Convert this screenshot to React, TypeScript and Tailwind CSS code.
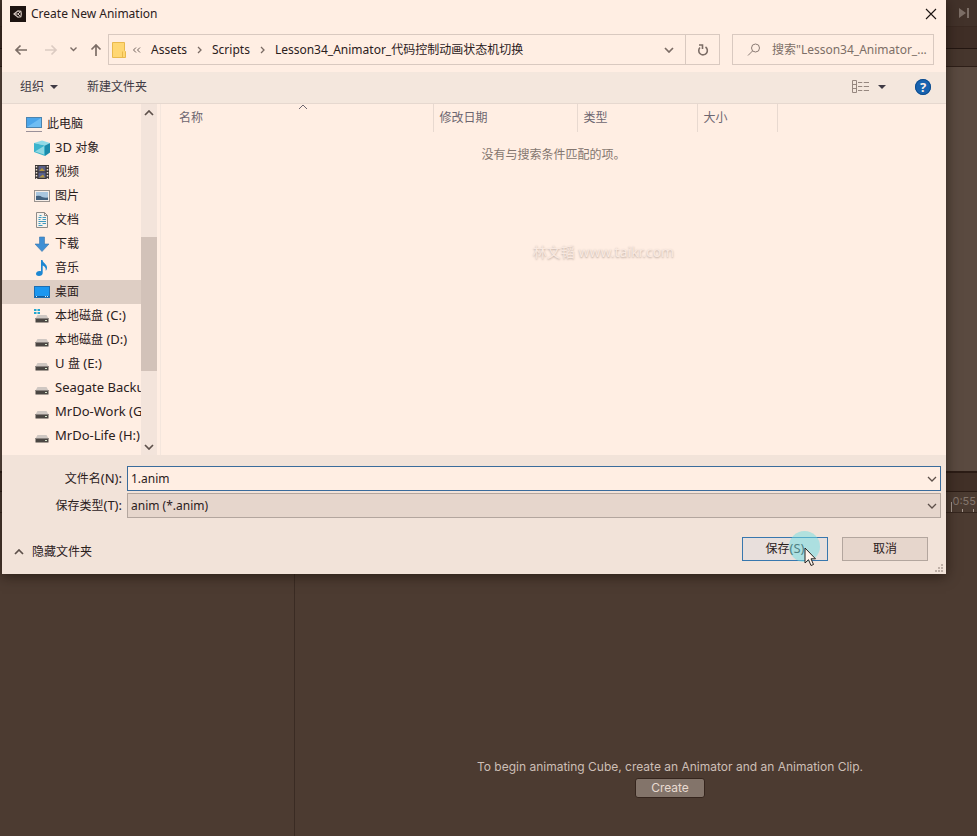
import type { ReactNode } from 'react';

type IconProps = { className?: string };

function Chevron({ className = '' }: IconProps) {
  return (
    <svg viewBox="0 0 10 6" className={`h-[6px] w-[10px] shrink-0 ${className}`} fill="none" stroke="currentColor">
      <path d="M1 1l4 4 4-4" />
    </svg>
  );
}

function UnityIcon() {
  return (
    <svg viewBox="0 0 16 16" className="size-4 shrink-0">
      <rect width="16" height="16" fill="#1d1310" />
      <path d="M4 8l4-3.200 2.800.4.500 2.800-.5 2.800-2.800.4z" fill="none" stroke="#d9cbc3" strokeWidth="1.200" />
      <path d="M4 8H8M8 8l2.500-2.500M8 8l2.500 2.500" stroke="#d9cbc3" />
    </svg>
  );
}

function PcIcon() {
  return (
    <svg viewBox="0 0 16 16" className="size-4 shrink-0">
      <rect x="0.500" y="1.500" width="15" height="10" fill="#4ba5ea" stroke="#4b83ae" />
      <path d="M1 11L15 2v9z" fill="#6fbdf3" />
      <path d="M0 15.500h16" stroke="#9a9099" />
    </svg>
  );
}

function CubeIcon() {
  return (
    <svg viewBox="0 0 16 16" className="size-4 shrink-0">
      <path d="M0 3l8-2.500L16 3l-5 2.500z" fill="#8fdbe8" />
      <path d="M0 3l11 2.500V16L0 12z" fill="#3cb4cd" />
      <path d="M11 5.500L16 3v9.500L11 16z" fill="#1b8bab" />
      <path d="M1 11.500l9-5.500v8.500z" fill="#8fd8e2" />
    </svg>
  );
}

function VideoIcon() {
  return (
    <svg viewBox="0 0 16 16" className="size-4 shrink-0">
      <rect x="1" y="1" width="14" height="14" fill="#3a3534" />
      <path d="M2.500 2v13M13.500 2v13" stroke="#e9ddd3" strokeWidth="1.500" strokeDasharray="1.500 1.500" />
      <rect x="4.500" y="2" width="7" height="5.500" fill="#5a5f86" />
      <rect x="4.500" y="8.500" width="7" height="5.500" fill="#56608e" />
      <path d="M5 7l3-3 3 3zM5 13.500l4-3 2 3z" fill="#b5973d" />
    </svg>
  );
}

function PictureIcon() {
  return (
    <svg viewBox="0 0 16 16" className="size-4 shrink-0">
      <rect x="0.500" y="2.500" width="15" height="11" fill="#f7eee8" stroke="#9a938f" />
      <rect x="2" y="4" width="12" height="8" fill="#a9c6df" />
      <path d="M2 8q4-1 6 1 3 1 6 .5V12H2z" fill="#42617f" />
    </svg>
  );
}

function DocIcon() {
  return (
    <svg viewBox="0 0 16 16" className="size-4 shrink-0">
      <path d="M2.500.5h8l3 3v12h-11z" fill="#f8f1eb" stroke="#8f8b87" />
      <path d="M10.500.5v3h3" fill="none" stroke="#8f8b87" />
      <path d="M5.500 3.500h2M4.500 5.500h3M8.500 5.500h3.500M4.500 7.500h2M8.500 7.500H12M4.500 9.500h7.500M4.500 11.500h2M8.500 11.500H12M4.500 13.500h4" stroke="#3f9abf" />
    </svg>
  );
}

function DownloadIcon() {
  return (
    <svg viewBox="0 0 16 16" className="size-4 shrink-0">
      <path d="M5.500 1h5v7H15l-7 7.500L1 8h4.500z" fill="#3f8fd4" stroke="#3a76ad" strokeWidth="0.600" />
    </svg>
  );
}

function MusicIcon() {
  return (
    <svg viewBox="0 0 16 16" className="size-4 shrink-0">
      <path d="M7 0h1.500c.3 3 4.500 4 4.500 7.500 0 1.500-.5 2.500-1.300 3.300.6-3-1-4.300-3-5.300V13c0 1.800-1.700 3-3.700 3C3.300 16 2 15.200 2 13.800c0-1.600 1.700-2.800 3.500-2.800.6 0 1 .1 1.500.3z" fill="#1d87d2" />
    </svg>
  );
}

function DesktopIcon() {
  return (
    <svg viewBox="0 0 16 16" className="size-4 shrink-0">
      <rect x="0.500" y="2.500" width="15" height="11" fill="#1b97f0" stroke="#1c6eb2" />
      <path d="M1 12.500h14" stroke="#155c98" />
      <path d="M2 12.500h2M11 12.500h3" stroke="#d9ecf8" strokeDasharray="1 1" />
    </svg>
  );
}

function DriveIcon({ system = false }: { system?: boolean }) {
  return (
    <svg viewBox="0 0 16 16" className="size-4 shrink-0">
      {system && <path d="M0 1h2.500v2H0zM3.500 1H6v2H3.500zM0 4h2.500v2H0zM3.500 4H6v2H3.500z" fill="#23a7cf" />}
      <path d="M3.500 7h9l2 3.500h-13z" fill="#cfc7c2" />
      <rect x="1.500" y="10" width="13" height="4.500" fill="#4b4643" />
      <path d="M1.500 10.500h13" stroke="#8a837f" />
      <rect x="11" y="12" width="2" height="1" fill="#d6e6cb" />
    </svg>
  );
}

const places: { label: string; icon: ReactNode; root?: boolean; selected?: boolean }[] = [
  { label: '此电脑', icon: <PcIcon />, root: true },
  { label: '3D 对象', icon: <CubeIcon /> },
  { label: '视频', icon: <VideoIcon /> },
  { label: '图片', icon: <PictureIcon /> },
  { label: '文档', icon: <DocIcon /> },
  { label: '下载', icon: <DownloadIcon /> },
  { label: '音乐', icon: <MusicIcon /> },
  { label: '桌面', icon: <DesktopIcon />, selected: true },
  { label: '本地磁盘 (C:)', icon: <DriveIcon system /> },
  { label: '本地磁盘 (D:)', icon: <DriveIcon /> },
  { label: 'U 盘 (E:)', icon: <DriveIcon /> },
  { label: 'Seagate Backu', icon: <DriveIcon /> },
  { label: 'MrDo-Work (G', icon: <DriveIcon /> },
  { label: 'MrDo-Life (H:)', icon: <DriveIcon /> },
];

function TitleBar() {
  return (
    <header className="flex h-[27px] items-center gap-[5px] pr-[9px] pl-2">
      <UnityIcon />
      <h1 className="flex-1">Create New Animation</h1>
      <button type="button" aria-label="关闭">
        <svg viewBox="0 0 12 12" className="size-3" stroke="#1b1412" strokeWidth="1.100">
          <path d="M1 1l10 10M11 1L1 11" />
        </svg>
      </button>
    </header>
  );
}

function Arrow({ className = '' }: IconProps) {
  return (
    <svg viewBox="0 0 14 12" className={`h-3 w-[14px] ${className}`} fill="none" stroke="currentColor" strokeWidth="1.700">
      <path d="M13 6H2M6.500 1.500L2 6l4.500 4.500" />
    </svg>
  );
}

function Crumb({ children }: { children: ReactNode }) {
  return (
    <button type="button" className="whitespace-nowrap">
      {children}
    </button>
  );
}

function CrumbSeparator() {
  return (
    <svg viewBox="0 0 5 8" className="h-2 w-[5px] shrink-0" fill="none" stroke="#7a6b64" strokeWidth="1.300">
      <path d="M1 1l3 3-3 3" />
    </svg>
  );
}

function NavigationBar() {
  return (
    <nav className="mt-[7px] flex h-[31px] items-center pr-3">
      <div className="flex w-[106px] shrink-0 items-center pl-3 text-[#7c6d66]">
        <button type="button" aria-label="后退" className="mr-4">
          <Arrow />
        </button>
        <button type="button" aria-label="前进" className="mr-3 text-[#dccbc2]">
          <Arrow className="rotate-180" />
        </button>
        <button type="button" aria-label="最近" className="mr-3">
          <svg viewBox="0 0 7 5" className="h-[5px] w-[7px]" fill="none" stroke="currentColor" strokeWidth="1.400">
            <path d="M.5.5l3 3 3-3" />
          </svg>
        </button>
        <button type="button" aria-label="上移">
          <Arrow className="rotate-90" />
        </button>
      </div>
      <div className="flex h-full min-w-0 flex-1 border border-[#d9c9c0]">
        <div className="flex min-w-0 flex-1 items-center gap-[10px] overflow-hidden pl-[3px]">
          <svg viewBox="0 0 14 18" className="h-[18px] w-[14px] shrink-0">
            <path d="M.5 1.500h12v8l1 1v6h-13z" fill="#ffd773" stroke="#e9b94c" />
            <path d="M10.500 10.500v6" stroke="#e9b94c" />
          </svg>
          <svg viewBox="0 0 9 6" className="-ml-1 h-[6px] w-[9px] shrink-0" fill="none" stroke="#6f615b">
            <path d="M4 .5L1.500 3 4 5.500M8 .5L5.500 3 8 5.500" />
          </svg>
          <Crumb>Assets</Crumb>
          <CrumbSeparator />
          <Crumb>Scripts</Crumb>
          <CrumbSeparator />
          <Crumb>Lesson34_Animator_代码控制动画状态机切换</Crumb>
        </div>
        <button type="button" aria-label="历史记录" className="flex w-8 shrink-0 items-center justify-center text-[#7c6d66]">
          <Chevron className="[stroke-width:1.700]" />
        </button>
        <button type="button" aria-label="刷新" className="flex w-[34px] shrink-0 items-center justify-center border-l border-[#d9c9c0]">
          <svg viewBox="0 0 12 12" className="size-3" fill="none" stroke="#7c6d66" strokeWidth="1.600">
            <path d="M8.500 3A4.300 4.300 0 1 1 3 3.500M2 1h3.500v4" />
          </svg>
        </button>
      </div>
      <label className="ml-3 flex h-full w-[202px] shrink-0 items-center border border-[#d9c9c0] pr-1 pl-[14px]">
        <svg viewBox="0 0 14 14" className="size-[14px] shrink-0" fill="none" stroke="#8a7b74">
          <circle cx="8.500" cy="5" r="4" />
          <path d="M5.500 8L1 12.500" />
        </svg>
        <input
          type="text"
          aria-label="搜索"
          placeholder={'搜索"Lesson34_Animator_...'}
          className="ml-[11px] min-w-0 flex-1 bg-transparent outline-none placeholder:text-[#7d6e67]"
        />
      </label>
    </nav>
  );
}

function CommandBar() {
  return (
    <div className="mt-[7px] flex h-8 items-center border-b border-[#e6d8cf] bg-[#f4e7dd] pr-[15px] pb-[2px] pl-[18px] text-[#3f3a44]">
      <button type="button" className="flex items-center gap-[6px]">
        组织
        <svg viewBox="0 0 8 4" className="h-1 w-2" fill="currentColor">
          <path d="M0 0h8L4 4z" />
        </svg>
      </button>
      <button type="button" className="ml-[29px]">
        新建文件夹
      </button>
      <button type="button" aria-label="更改视图" className="ml-auto flex items-center gap-[9px]">
        <svg viewBox="0 0 17 13" className="h-[13px] w-[17px]" fill="none" stroke="#96877f">
          <path d="M.5.5h4v12h-4zM.5 4.500h4M.5 8.500h4M6 2.500h11M6 6.500h11M6 10.500h11" />
          <path d="M11 1v11" stroke="#f4e7dd" strokeWidth="1.500" />
        </svg>
        <svg viewBox="0 0 8 4" className="h-1 w-2" fill="currentColor">
          <path d="M0 0h8L4 4z" />
        </svg>
      </button>
      <button
        type="button"
        aria-label="帮助"
        className="ml-[29px] flex size-4 items-center justify-center rounded-full bg-[#1763b0] text-[13px] leading-4 font-bold text-[#fbeee6] outline-1 -outline-offset-1 outline-[#0f4c8c]"
      >
        ?
      </button>
    </div>
  );
}

/* Chinese glyphs run one step smaller than the Latin ones around them. */
function MixedText({ text }: { text: string }) {
  return (
    <span className="text-[13px]">
      {text.split(/([\u3000-\u9fff]+)/).map((part, index) =>
        index % 2 ? (
          <span key={index} className="text-[12px]">
            {part}
          </span>
        ) : (
          part
        ),
      )}
    </span>
  );
}

function PlacesPane() {
  return (
    <aside className="flex w-[159px] shrink-0 border-r border-[#f4e6dd]">
      <ul className="min-w-0 flex-1 overflow-hidden pt-2">
        {places.map((place) => (
          <li key={place.label}>
            <button
              type="button"
              className={`flex h-6 w-full items-center gap-[5px] overflow-hidden whitespace-nowrap ${place.root ? 'pl-6' : 'pl-8'} ${
                place.selected ? 'bg-[#decec4]' : ''
              }`}
            >
              {place.icon}
              <MixedText text={place.label} />
            </button>
          </li>
        ))}
      </ul>
      <div className="mr-[3px] flex w-4 shrink-0 flex-col items-center bg-[#f3e4db] text-[#5d504a]">
        <Chevron className="mt-[6px] rotate-180 [stroke-width:1.700]" />
        <div className="mt-[121px] h-[134px] w-full bg-[#d2c2b9]" />
        <Chevron className="mt-auto mb-[5px] [stroke-width:1.700]" />
      </div>
    </aside>
  );
}

function FileList() {
  return (
    <section className="min-w-0 flex-1">
      <table className="w-full table-fixed border-collapse text-[#6d6670]">
        <thead>
          <tr className="h-7">
            <th className="relative w-[272px] border-r border-[#e8d9d0] pl-[18px] text-left font-normal">
              名称
              <Chevron className="absolute top-0 left-[137px] rotate-180" />
            </th>
            <th className="w-36 border-r border-[#e8d9d0] pl-[6px] text-left font-normal">修改日期</th>
            <th className="w-[120px] border-r border-[#e8d9d0] pl-[6px] text-left font-normal">类型</th>
            <th className="w-20 border-r border-[#e8d9d0] pl-[6px] text-left font-normal">大小</th>
            <th />
          </tr>
        </thead>
        <tbody>
          <tr className="h-[46px]">
            <td colSpan={5} className="text-center text-[#84766f]">
              没有与搜索条件匹配的项。
            </td>
          </tr>
        </tbody>
      </table>
      <p className="mt-16 pl-[100px] text-center text-[14px] leading-5 text-[#f9e9e0] [text-shadow:0_1px_2px_#b9a79d]">林文韬 www.taikr.com</p>
    </section>
  );
}

function DialogFooter() {
  return (
    <footer className="bg-[#f2e3d9] pt-[11px] pr-[5px] pb-[13px]">
      <div className="grid grid-cols-[120px_minmax(0,1fr)] items-center gap-x-[5px] gap-y-[2px]">
        <label htmlFor="file-name" className="text-right">
          <MixedText text="文件名(N):" />
        </label>
        <div className="flex h-[25px] items-center border border-[#3a6c9c] bg-[#ffeee3] pr-[3px]">
          <input id="file-name" type="text" defaultValue="1.anim" className="min-w-0 flex-1 bg-transparent pl-[3px] outline-none" />
          <Chevron className="text-[#5d504a] [stroke-width:1.300]" />
        </div>
        <label htmlFor="file-type" className="text-right">
          <MixedText text="保存类型(T):" />
        </label>
        <div className="relative">
          <select id="file-type" className="block h-[25px] w-full appearance-none border border-[#b3a69e] bg-[#e6d6cc] pl-[3px] outline-none">
            <option>anim (*.anim)</option>
          </select>
          <Chevron className="pointer-events-none absolute top-[10px] right-1 text-[#5d504a] [stroke-width:1.300]" />
        </div>
      </div>
      <div className="mt-[19px] flex h-6 items-center pr-[13px] pl-3">
        <button type="button" className="mt-[6px] flex items-center gap-2">
          <Chevron className="rotate-180 text-[#5d504a] [stroke-width:1.700]" />
          隐藏文件夹
        </button>
        <button type="button" className="relative ml-auto h-6 w-[86px] border border-[#3877ae] bg-[#e8dfdc]">
          <MixedText text="保存(S)" />
          <span className="absolute -top-[7px] left-[46px] size-[31px] rounded-full bg-[#6fe0e4]/50" />
          <svg viewBox="0 0 13 20" className="absolute top-[9px] left-[61px] h-5 w-[13px]" fill="#fff3ea" stroke="#2a2321">
            <path d="M1 1v15l3.500-3.300 2.500 5.800 2.500-1-2.500-5.700h4.500z" />
          </svg>
        </button>
        <button type="button" className="ml-[14px] h-6 w-[86px] border border-[#b3a69e] bg-[#e6d6cc]">
          取消
        </button>
      </div>
      <svg viewBox="0 0 9 9" className="absolute right-[2px] bottom-[1px] size-[9px]" fill="#bfb0a7">
        <path d="M6 0h2v2H6zM3 3h2v2H3zM6 3h2v2H6zM0 6h2v2H0zM3 6h2v2H3zM6 6h2v2H6z" />
      </svg>
    </footer>
  );
}

function SaveDialog() {
  return (
    <div
      role="dialog"
      aria-label="Create New Animation"
      className="absolute top-0 right-[31px] left-[2px] bg-[#ffeee3] text-[12px] text-[#2b201c] shadow-[0_2px_12px_rgba(20,10,5,0.6)]"
    >
      <TitleBar />
      <NavigationBar />
      <CommandBar />
      <div className="flex h-[351px]">
        <PlacesPane />
        <FileList />
      </div>
      <DialogFooter />
    </div>
  );
}

function EditorBackground() {
  return (
    <main className="flex min-h-screen flex-col bg-[#4c3b31] font-[Inter,sans-serif] text-[12px] text-[#c9bbb2]">
      <div className="flex h-[27px] items-center justify-end border-b border-[#3a2921] bg-[#42322a] pr-2">
        <svg viewBox="0 0 10 10" className="size-[10px]" fill="#7c6e66">
          <path d="M0 0l7 5-7 5zM8 0h2v10H8z" />
        </svg>
      </div>
      <div className="h-[22px] border-b border-[#231611] bg-[#3f2e26]" />
      <div className="h-[18px] border-b border-[#2e1f18] bg-[#46362d]" />
      <div className="h-[404px] bg-[#5a4a40]" />
      <div className="h-[21px] border-t-2 border-b border-[#2b1c15] bg-[#413027]" />
      <div className="flex h-[21px] items-end justify-end gap-[2px] border-b border-[#35261e] bg-[#4b3b31] pr-px text-[11px] text-[#84766d]">
        <svg viewBox="0 0 24 10" className="-mr-6 h-[10px] w-6" fill="#a89a91">
          <path d="M0 0h1v10H0zM11 7h1v3h-1zM22 7h1v3h-1z" />
        </svg>
        <span className="mb-1 leading-[14px]">0:55</span>
      </div>
      <div className="flex flex-1">
        <div className="w-[295px] shrink-0 border-r border-[#3a2b23]" />
        <div className="flex flex-1 flex-col items-center justify-end pb-[38px] pl-[68px]">
          <p className="leading-5 text-[#cdbfb6]">To begin animating Cube, create an Animator and an Animation Clip.</p>
          <button type="button" className="mt-px h-5 w-[70px] rounded-[3px] border border-[#35251d] bg-[#83746a] leading-4 text-[#e8dad0]">
            Create
          </button>
        </div>
      </div>
    </main>
  );
}

export default function App() {
  return (
    <div className="relative min-h-screen overflow-hidden font-['Noto_Sans','Noto_Sans_CJK_SC',sans-serif]">
      <EditorBackground />
      <SaveDialog />
    </div>
  );
}
